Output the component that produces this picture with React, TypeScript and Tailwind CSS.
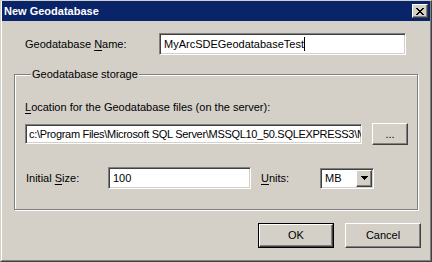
const sunken =
  'border border-t-[#808080] border-l-[#808080] border-b-white border-r-white shadow-[inset_1px_1px_0_#404040,inset_-1px_-1px_0_#d4d0c8] bg-white';
const raised =
  'border border-t-white border-l-white border-b-[#404040] border-r-[#404040] shadow-[inset_-1px_-1px_0_#808080] bg-[#d4d0c8]';

function Mnemonic({ before = '', letter, after = '' }: { before?: string; letter: string; after?: string }) {
  return (
    <span className="whitespace-nowrap">
      {before}
      <span className="underline underline-offset-[2px]">{letter}</span>
      {after}
    </span>
  );
}

export default function App() {
  return (
    <div className="w-[432px] h-[262px] bg-[#d4d0c8] border border-t-[#d4d0c8] border-l-[#d4d0c8] border-r-[#404040] border-b-[#404040] font-['Liberation_Sans',Arial,sans-serif] text-[11px] leading-[13px] text-black">
      <div className="h-full flex flex-col border-l border-l-white border-r border-r-[#808080] border-b border-b-[#808080]">
        {/* title bar */}
        <div className="h-[20px] bg-[#0a246a] flex items-center justify-between pl-[2px] pr-[2px]">
          <span className="text-white font-bold">New Geodatabase</span>
          <button className={`w-[16px] h-[14px] flex items-center justify-center ${raised}`}>
            <svg width="8" height="7" viewBox="0 0 8 7" shapeRendering="crispEdges">
              <path
                d="M0 0h2v1h-2zM6 0h2v1h-2zM1 1h2v1h-2zM5 1h2v1h-2zM2 2h4v1h-4zM3 3h2v1h-2zM2 4h4v1h-4zM1 5h2v1h-2zM5 5h2v1h-2zM0 6h2v1h-2zM6 6h2v1h-2z"
                fill="#000"
              />
            </svg>
          </button>
        </div>

        {/* name */}
        <div className="mt-[12px] flex items-center pl-[23px]">
          <label className="w-[134px]">
            <Mnemonic before="Geodatabase " letter="N" after="ame:" />
          </label>
          <div className={`w-[247px] h-[22px] flex items-center pl-[4px] ${sunken}`}>
            <span>MyArcSDEGeodatabaseTest</span>
            <span className="w-px h-[14px] bg-black" />
          </div>
        </div>

        {/* storage group */}
        <fieldset className="mt-[13px] ml-[12px] w-[404px] h-[142px] border border-[#808080] shadow-[inset_1px_1px_0_#fff,1px_1px_0_#fff] pl-[10px]">
          <legend className="ml-[6px] px-[1px] bg-[#d4d0c8] leading-[13px]">Geodatabase storage</legend>

          <div className="mt-[20px]">
            <Mnemonic letter="L" after="ocation for the Geodatabase files (on the server):" />
          </div>

          <div className="mt-[9px] flex items-center">
            <div className={`w-[337px] h-[20px] flex items-center pl-[3px] overflow-hidden ${sunken}`}>
              <span className="whitespace-nowrap tracking-[-0.3px]">
                c:\Program Files\Microsoft SQL Server\MSSQL10_50.SQLEXPRESS3\MSSQL
              </span>
            </div>
            <button className={`ml-[10px] w-[36px] h-[22px] flex items-center justify-center ${raised}`}>...</button>
          </div>

          <div className="mt-[22px] flex items-center">
            <label className="w-[83px] pl-px">
              <Mnemonic before="Initial " letter="S" after="ize:" />
            </label>
            <div className={`w-[143px] h-[22px] flex items-center pl-[4px] ${sunken}`}>100</div>
            <label className="ml-[10px] w-[59px]">
              <Mnemonic letter="U" after="nits:" />
            </label>
            <div className={`w-[54px] h-[21px] flex items-center justify-between pl-[4px] pr-px ${sunken}`}>
              <span>MB</span>
              <div className={`w-[16px] h-[17px] flex items-center justify-center ${raised}`}>
                <svg width="7" height="4" viewBox="0 0 7 4" shapeRendering="crispEdges">
                  <path d="M0 0h7v1h-7zM1 1h5v1h-5zM2 2h3v1h-3zM3 3h1v1h-1z" fill="#000" />
                </svg>
              </div>
            </div>
          </div>
        </fieldset>

        {/* buttons */}
        <div className="mt-[13px] flex justify-end gap-[11px] pr-[9px]">
          <div className="border border-black">
            <button className={`w-[74px] h-[23px] flex items-center justify-center ${raised}`}>OK</button>
          </div>
          <button className={`w-[76px] h-[25px] flex items-center justify-center ${raised}`}>Cancel</button>
        </div>
      </div>
    </div>
  );
}
